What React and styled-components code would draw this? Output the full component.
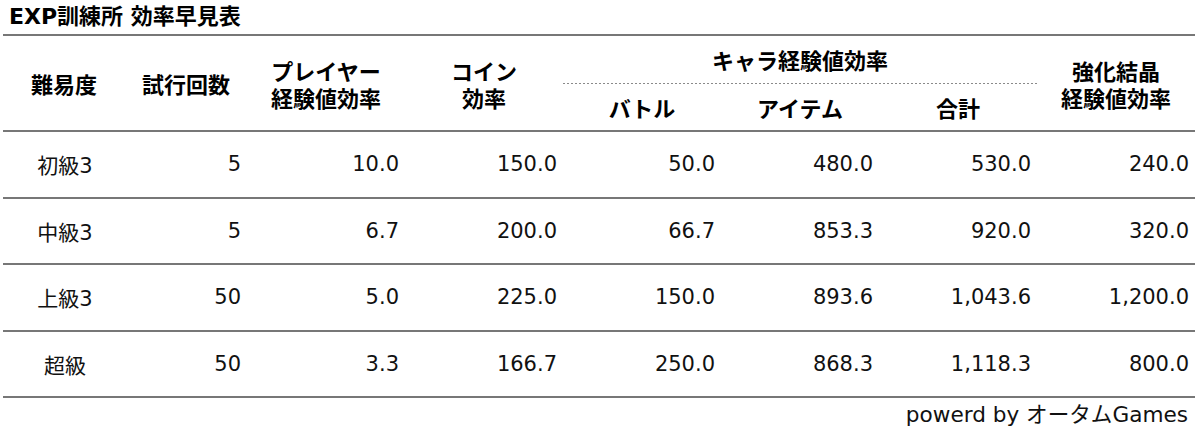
import React from "react";
import styled, { createGlobalStyle } from "styled-components";

const GlobalStyle = createGlobalStyle`
  html, body {
    margin: 0;
    padding: 0;
    background: #ffffff;
  }
  body {
    font-family: "DejaVu Sans", "Noto Sans CJK JP", sans-serif;
    color: #111;
  }
`;

const COLS = "122px 122px repeat(6, 158px)";
const LINE = "#777";

const Page = styled.div`
  width: 1192px;
  padding: 0 5px 0 3px;
`;

const Title = styled.h1`
  margin: 0;
  height: 34px;
  line-height: 34px;
  padding-left: 6px;
  font-size: 22px;
  font-weight: 700;
  color: #000;
  font-family: "DejaVu Sans", "Noto Sans CJK JP", sans-serif;
`;

const Header = styled.div`
  display: grid;
  grid-template-columns: ${COLS};
  grid-template-rows: 48px 46px;
  border-top: 2px solid ${LINE};
  border-bottom: 2px solid ${LINE};
`;

const HeadCell = styled.div`
  grid-row: ${(p) => (p.$sub ? "2" : "1 / span 2")};
  grid-column: ${(p) => p.$col};
  display: flex;
  flex-direction: column;
  align-items: center;
  justify-content: center;
  text-align: center;
  font-family: "Noto Sans CJK JP", sans-serif;
  font-weight: 700;
  font-size: 22px;
  line-height: 27px;
  color: #000;
  padding-top: ${(p) => (p.$sub ? "0" : "1px")};
`;

const GroupCell = styled.div`
  grid-row: 1;
  grid-column: 5 / span 3;
  display: flex;
  align-items: center;
  justify-content: center;
  font-family: "Noto Sans CJK JP", sans-serif;
  font-weight: 700;
  font-size: 22px;
  color: #000;
  padding-bottom: 2px;
  background-image: repeating-linear-gradient(
    to right,
    #8a8a8a 0 2px,
    transparent 2px 4px
  );
  background-size: 100% 1px;
  background-position: left bottom;
  background-repeat: no-repeat;
`;

const Row = styled.div`
  display: grid;
  grid-template-columns: ${COLS};
  height: 66.5px;
  box-sizing: border-box;
  border-bottom: 2px solid ${LINE};
  align-items: center;
`;

const Cell = styled.div`
  font-size: 21px;
  color: #111;
  text-align: ${(p) => (p.$center ? "center" : "right")};
  padding-right: ${(p) => (p.$center ? "0" : "6px")};
  padding-left: ${(p) => (p.$center ? "2px" : "0")};
`;

const Footer = styled.div`
  height: 34px;
  line-height: 34px;
  text-align: right;
  padding-right: 7px;
  font-size: 21.6px;
  color: #111;
`;

const rows = [
  ["初級3", "5", "10.0", "150.0", "50.0", "480.0", "530.0", "240.0"],
  ["中級3", "5", "6.7", "200.0", "66.7", "853.3", "920.0", "320.0"],
  ["上級3", "50", "5.0", "225.0", "150.0", "893.6", "1,043.6", "1,200.0"],
  ["超級", "50", "3.3", "166.7", "250.0", "868.3", "1,118.3", "800.0"],
];

export default function App() {
  return (
    <Page>
      <GlobalStyle />
      <Title>EXP訓練所 効率早見表</Title>
      <Header>
        <HeadCell $col="1">難易度</HeadCell>
        <HeadCell $col="2">試行回数</HeadCell>
        <HeadCell $col="3">
          <span>プレイヤー</span>
          <span>経験値効率</span>
        </HeadCell>
        <HeadCell $col="4">
          <span>コイン</span>
          <span>効率</span>
        </HeadCell>
        <GroupCell>キャラ経験値効率</GroupCell>
        <HeadCell $col="5" $sub>
          バトル
        </HeadCell>
        <HeadCell $col="6" $sub>
          アイテム
        </HeadCell>
        <HeadCell $col="7" $sub>
          合計
        </HeadCell>
        <HeadCell $col="8">
          <span>強化結晶</span>
          <span>経験値効率</span>
        </HeadCell>
      </Header>
      {rows.map((r) => (
        <Row key={r[0]}>
          {r.map((v, i) => (
            <Cell key={i} $center={i === 0}>
              {v}
            </Cell>
          ))}
        </Row>
      ))}
      <Footer>powerd by オータムGames</Footer>
    </Page>
  );
}
